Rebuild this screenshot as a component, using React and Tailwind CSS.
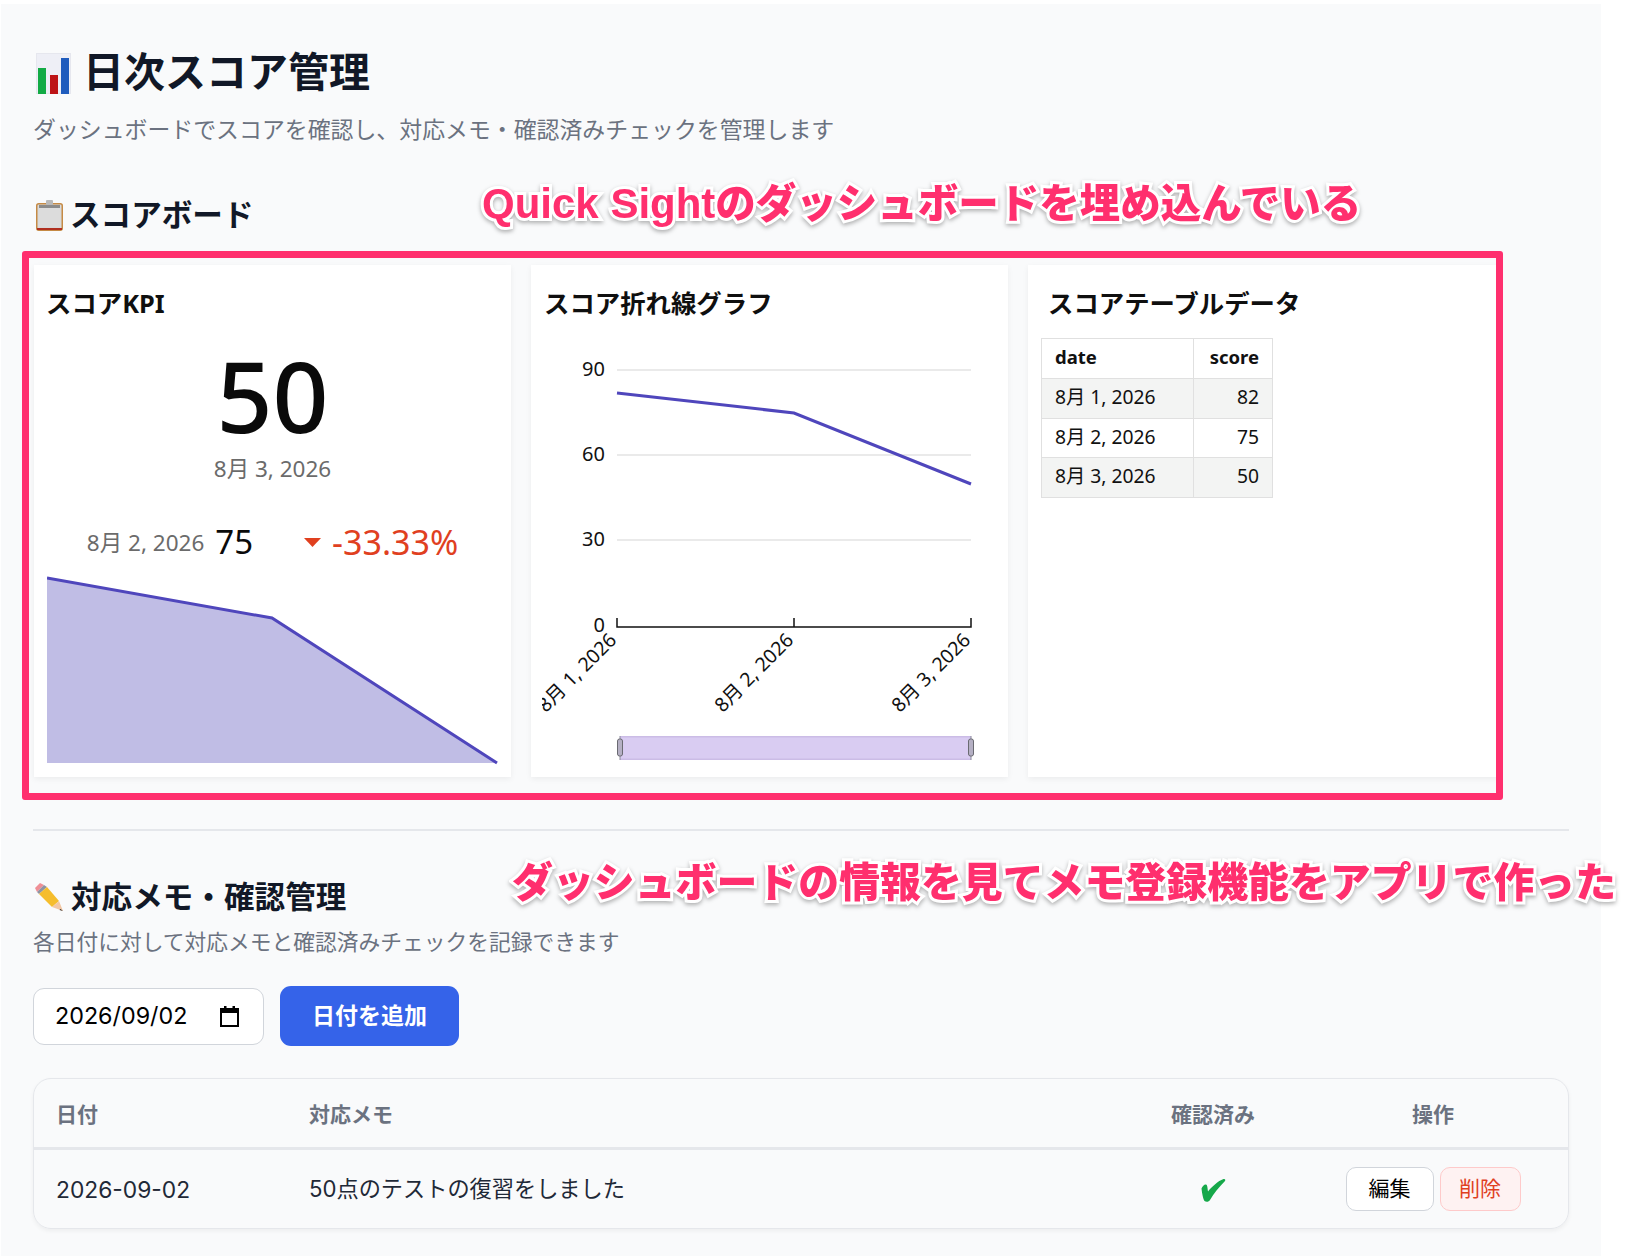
import React from 'react';

const UI_FONT = "font-['Inter','Noto_Sans_CJK_JP',sans-serif]";
const QS_FONT = "font-['Noto_Sans','Noto_Sans_CJK_JP',sans-serif]";

const TABLE_ROWS = [
  { date: '8月 1, 2026', score: 82, striped: true },
  { date: '8月 2, 2026', score: 75, striped: false },
  { date: '8月 3, 2026', score: 50, striped: true },
];

const AXIS_LABELS = [
  { x: 86, label: '8月 1, 2026' },
  { x: 263, label: '8月 2, 2026' },
  { x: 440, label: '8月 3, 2026' },
];

function ChartEmoji() {
  return (
    <svg width="35" height="41" viewBox="0 0 35 41" className="shrink-0">
      <rect width="35" height="41" fill="#e6e7ee" />
      <rect x="1" y="1" width="33" height="39" fill="#eeeff6" />
      <rect x="2" y="15" width="8" height="26" fill="#13ab45" />
      <rect x="14" y="22" width="8" height="19" fill="#bd1316" />
      <rect x="25" y="5" width="8" height="36" fill="#1f5cbd" />
    </svg>
  );
}

function ClipboardEmoji() {
  return (
    <svg width="27" height="31" viewBox="0 0 27 31" className="shrink-0">
      <rect x="0.75" y="3.75" width="25.5" height="26.5" rx="2" fill="#d9dadb" stroke="#c58a45" strokeWidth="1.5" />
      <rect x="3" y="5" width="21" height="22" fill="#dcdcdc" />
      <rect x="3" y="5" width="21" height="3" fill="#8b8b8b" />
      <rect x="1" y="28" width="25" height="2" fill="#b03020" />
      <rect x="10" y="0" width="7" height="5" rx="1" fill="#b9b9b9" />
    </svg>
  );
}

function PencilEmoji() {
  return (
    <svg width="30" height="30" viewBox="0 0 30 30" className="shrink-0">
      <path d="M1 6 L6 1 L10 3 L3 10 Z" fill="#ef8f96" />
      <path d="M3 10 L10 3 L13 5 L5 12 Z" fill="#8f94a3" />
      <path d="M5 12 L13 5 L25 19 L18 25 Z" fill="#f5bd2d" />
      <path d="M18 25 L25 19 L29 29 Z" fill="#f2c7a4" />
      <path d="M26.5 27 L29 29 L25.5 28 Z" fill="#2a2a2a" />
    </svg>
  );
}

function CheckMark() {
  return (
    <svg width="25" height="23" viewBox="0 0 25 23" className="mx-auto block">
      <path
        d="M0.5 9.5 C1.5 7 3.5 5 5 5.5 C6.5 6 6.5 9 7 12.5 C11 7.5 17 2 22.5 0 C24 -0.3 25 1 23.8 2.2 C18 8 13 14 9 21 C8 23 5 23.4 3.5 22 C2 19.5 1 14 0.5 9.5 Z"
        fill="#16a84a"
      />
    </svg>
  );
}

function CalendarIcon() {
  return (
    <svg width="19" height="21" viewBox="0 0 19 21" className="shrink-0">
      <rect x="1" y="3" width="17" height="17" fill="none" stroke="#000" strokeWidth="2" />
      <rect x="1" y="3" width="17" height="4" fill="#000" />
      <rect x="4" y="0" width="2.5" height="4" fill="#000" />
      <rect x="12.5" y="0" width="2.5" height="4" fill="#000" />
    </svg>
  );
}

function CardTitle({ children, className }) {
  return <h3 className={`text-[25.4px] leading-[32px] font-bold text-[#0f0f0f] ${className}`}>{children}</h3>;
}

function KpiCard() {
  return (
    <div className={`w-[477px] h-[512px] shrink-0 bg-white shadow-[0_2px_6px_rgba(0,0,0,0.06)] pt-[22px] px-[13px] ${QS_FONT}`}>
      <CardTitle className="-ml-[1px]">スコアKPI</CardTitle>
      <div className="mt-[31px] text-center text-[98px] leading-[90px] font-medium text-[#0a0a0a]">50</div>
      <div className="mt-[14px] text-center text-[22.5px] leading-[30px] text-[#6b6b6b]">8月 3, 2026</div>
      <div className="mt-[38px] h-[40px] flex items-center justify-center">
        <span className="text-[22.5px] text-[#6b6b6b] mt-[2px]">8月 2, 2026</span>
        <span className="ml-[11px] text-[33px] text-[#0a0a0a]">75</span>
        <svg width="17" height="9" viewBox="0 0 17 9" className="ml-[51px]">
          <path d="M0 0 H17 L8.5 9 Z" fill="#e0401f" />
        </svg>
        <span className="ml-[11px] text-[34px] text-[#e0401f]">-33.33%</span>
      </div>
      <svg width="451" height="190" viewBox="0 0 451 190" className="mt-[13px] block">
        <path d="M0 3 L225 43 L450 188 H0 Z" fill="#c0bde5" />
        <path d="M0 3 L225 43 L450 188" fill="none" stroke="#4f46bc" strokeWidth="3" />
      </svg>
    </div>
  );
}

function LineChartCard() {
  // the svg starts at y=350 of the page and x=531, so plot rows are 20/105/190/277
  return (
    <div className={`w-[477px] h-[512px] shrink-0 bg-white shadow-[0_2px_6px_rgba(0,0,0,0.06)] pt-[22px] ${QS_FONT}`}>
      <CardTitle className="px-[13px]">スコア折れ線グラフ</CardTitle>
      <svg width="477" height="420" viewBox="0 0 477 420" className="mt-[31px] block">
        <defs>
          <clipPath id="axis-clip">
            <rect x="11" y="0" width="466" height="420" />
          </clipPath>
        </defs>
        {[20, 105, 190].map(y => (
          <line key={y} x1="86" x2="440" y1={y} y2={y} stroke="#e3e3e3" strokeWidth="1.5" />
        ))}
        {[[90, 20], [60, 105], [30, 190], [0, 276]].map(([v, y]) => (
          <text key={v} x="74" y={y + 1} textAnchor="end" dominantBaseline="middle" fontSize="20" fill="#111">{v}</text>
        ))}
        <path d="M86 43 L263 63 L440 134" fill="none" stroke="#4f46bc" strokeWidth="3" />
        <path d="M86 268 V277 H440 V268 M263 268 V277" fill="none" stroke="#111" strokeWidth="1.5" />
        <g clipPath="url(#axis-clip)">
          {AXIS_LABELS.map(a => (
            <text key={a.x} x={a.x + 1} y="292" textAnchor="end" fontSize="19.5" fill="#111" transform={`rotate(-45 ${a.x} 292)`}>{a.label}</text>
          ))}
        </g>
        <rect x="89" y="386" width="351" height="24" fill="#d9ccf2" />
        <rect x="89" y="386" width="351" height="1.5" fill="#cbbce6" />
        <rect x="89" y="408.5" width="351" height="1.5" fill="#cbbce6" />
        <line x1="89" x2="89" y1="386" y2="410" stroke="#8a8a9a" strokeWidth="1" />
        <line x1="440" x2="440" y1="386" y2="410" stroke="#8a8a9a" strokeWidth="1" />
        <rect x="86.5" y="389" width="5" height="17" rx="2" fill="#b5b0c4" stroke="#6a6a72" strokeWidth="1" />
        <rect x="437.5" y="389" width="5" height="17" rx="2" fill="#b5b0c4" stroke="#6a6a72" strokeWidth="1" />
      </svg>
    </div>
  );
}

function TableCard() {
  return (
    <div className={`w-[470px] h-[512px] shrink-0 bg-white shadow-[0_2px_6px_rgba(0,0,0,0.06)] pt-[22px] ${QS_FONT}`}>
      <CardTitle className="px-[20px]">スコアテーブルデータ</CardTitle>
      <table className="mt-[19px] ml-[13px] w-[232px] table-fixed border-collapse text-[19.3px] text-[#111]">
        <thead>
          <tr className="h-[40px]">
            <th className="w-[152px] border border-[#e0e0e0] pl-[13px] pb-[3px] text-left text-[18.5px] font-bold">date</th>
            <th className="border border-[#e0e0e0] pr-[13px] pb-[3px] text-right text-[18.5px] font-bold">score</th>
          </tr>
        </thead>
        <tbody>
          {TABLE_ROWS.map(row => (
            <tr key={row.date} className={`h-[39.5px] ${row.striped ? 'bg-[#f3f4f3]' : 'bg-white'}`}>
              <td className="border border-[#e0e0e0] pl-[13px] pb-[1px]">{row.date}</td>
              <td className="border border-[#e0e0e0] pr-[13px] pb-[1px] text-right">{row.score}</td>
            </tr>
          ))}
        </tbody>
      </table>
    </div>
  );
}

export default function App() {
  return (
    <div className={`relative w-[1642px] h-[1256px] overflow-hidden bg-white pt-[4px] pl-[1px] ${UI_FONT}`}>
      <div className="w-[1600px] h-[1252px] bg-[#f9fafb] pt-[45px] pl-[32px]">

        {/* Page heading */}
        <div className="h-[48px] flex items-center gap-[12px] pl-[3px]">
          <ChartEmoji />
          <h1 className="mb-[2px] text-[41px] leading-[46px] font-bold text-[#111827]">日次スコア管理</h1>
        </div>
        <p className="mt-[17px] text-[22.9px] leading-[32px] text-[#6b7280]">
          ダッシュボードでスコアを確認し、対応メモ・確認済みチェックを管理します
        </p>

        {/* Score board */}
        <div className="mt-[51px] flex items-center gap-[7px] pl-[3px]">
          <ClipboardEmoji />
          <h2 className="text-[30.6px] leading-[36px] font-bold text-[#111827]">スコアボード</h2>
        </div>
        <div className="mt-[32px] flex gap-[20px] pl-[1px]">
          <KpiCard />
          <LineChartCard />
          <TableCard />
        </div>

        <div className="mt-[52px] w-[1536px] h-[2px] bg-[#e5e7eb]" />

        {/* Memo section */}
        <div className="mt-[48px] flex items-center gap-[7px] pl-[1px]">
          <PencilEmoji />
          <h2 className="text-[30.6px] leading-[36px] font-bold text-[#111827]">対応メモ・確認管理</h2>
        </div>
        <p className="mt-[12px] text-[21.75px] leading-[30px] text-[#6b7280]">
          各日付に対して対応メモと確認済みチェックを記録できます
        </p>

        <div className="mt-[29px] flex items-center gap-[16px]">
          <div className="w-[231px] h-[57px] flex items-center justify-between bg-white border border-[#d1d5db] rounded-[11px] pl-[21px] pr-[24px]">
            <span className="text-[23.3px] text-black">2026/09/02</span>
            <CalendarIcon />
          </div>
          <button className="w-[179px] h-[60px] rounded-[11px] bg-[#3563e9] text-white text-[23px] font-bold">
            日付を追加
          </button>
        </div>

        <div className="mt-[32px] w-[1536px] h-[151px] rounded-[18px] border border-[#e5e7eb] shadow-[0_2px_4px_rgba(0,0,0,0.05)] overflow-hidden">
          <table className="w-full table-fixed border-collapse">
            <thead>
              <tr className="h-[69px] border-b-[3px] border-[#e5e7eb] text-[21px] font-bold text-[#6b7280]">
                <th className="w-[252px] pl-[22px] pt-[3px] text-left font-bold">日付</th>
                <th className="w-[842px] pl-[23px] pt-[3px] text-left font-bold">対応メモ</th>
                <th className="w-[170px] pt-[3px] text-center font-bold">確認済み</th>
                <th className="pt-[3px] text-center font-bold">操作</th>
              </tr>
            </thead>
            <tbody>
              <tr className="h-[79px] text-[#1f2937]">
                <td className="pl-[22px] pt-[4px] text-[22.8px]">2026-09-02</td>
                <td className="pl-[23px] text-[22.2px]">50点のテストの復習をしました</td>
                <td className="pt-[4px]"><CheckMark /></td>
                <td className="pt-[1px]">
                  <div className="flex justify-center gap-[6px]">
                    <button className="w-[88px] h-[44px] rounded-[10px] border border-[#d1d5db] bg-white text-[21px] text-black">編集</button>
                    <button className="w-[81px] h-[44px] rounded-[10px] border border-[#fecaca] bg-[#fef2f2] text-[21px] text-[#e0401f]">削除</button>
                  </div>
                </td>
              </tr>
            </tbody>
          </table>
        </div>
      </div>

      {/* Annotations drawn over the screenshot */}
      <div className="absolute left-[22px] top-[251px] w-[1481px] h-[549px] border-[7px] border-[#ff2f6e] rounded-[3px]" />
      <div className="absolute left-[482px] top-[174px] text-[40.5px] leading-[60px] font-black whitespace-nowrap text-[#ff2f6e] [-webkit-text-stroke:6px_white] [paint-order:stroke_fill] drop-shadow-[0_2px_2px_rgba(0,0,0,0.3)]">
        <span className="font-['Liberation_Sans'] text-[42px] font-bold">Quick Sight</span>のダッシュボードを埋め込んでいる
      </div>
      <div className="absolute left-[512px] top-[852px] text-[40.9px] leading-[60px] font-black whitespace-nowrap text-[#ff2f6e] [-webkit-text-stroke:6px_white] [paint-order:stroke_fill] drop-shadow-[0_2px_2px_rgba(0,0,0,0.3)]">
        ダッシュボードの情報を見てメモ登録機能をアプリで作った
      </div>
    </div>
  );
}
